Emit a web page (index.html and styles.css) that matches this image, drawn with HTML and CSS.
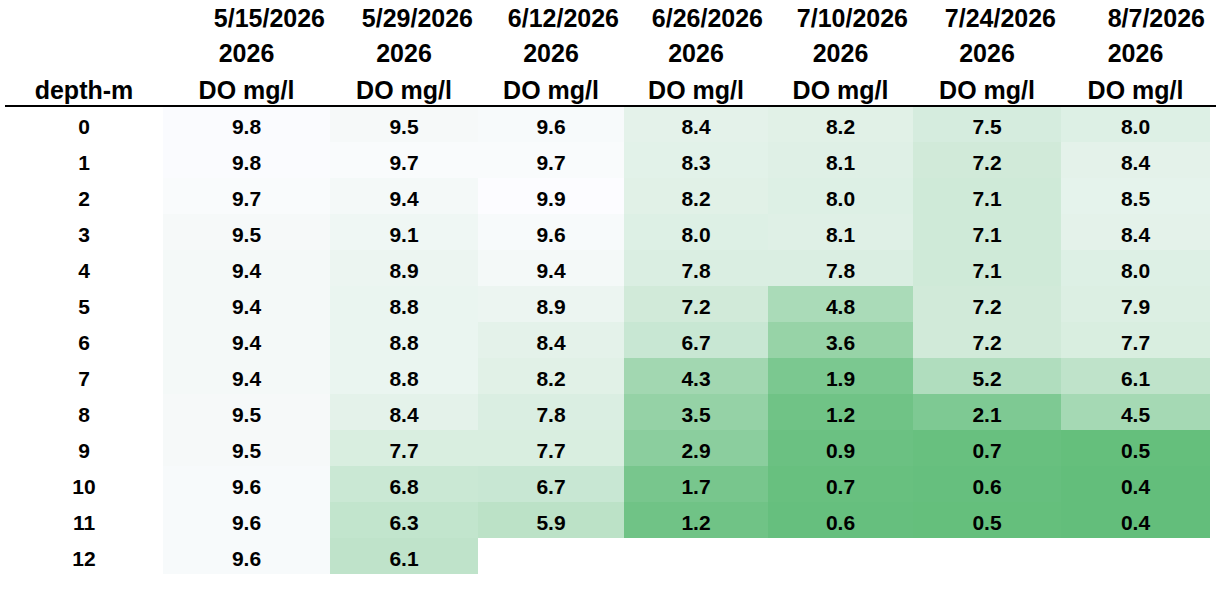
FILE: index.html
```html
<!DOCTYPE html>
<html>
<head>
<meta charset="utf-8">
<title>DO mg/l by depth</title>
<link rel="stylesheet" href="styles.css">
</head>
<body>
<table class="grid">
  <colgroup>
    <col class="c-depth">
    <col class="c-515">
    <col class="c-529">
    <col class="c-612">
    <col class="c-626">
    <col class="c-710">
    <col class="c-724">
    <col class="c-87">
    <col class="c-extra">
  </colgroup>
  <thead>
    <tr class="h-date">
      <th></th>
      <th class="date">5/15/2026</th>
      <th class="date">5/29/2026</th>
      <th class="date">6/12/2026</th>
      <th class="date">6/26/2026</th>
      <th class="date">7/10/2026</th>
      <th class="date">7/24/2026</th>
      <th class="date">8/7/2026</th>
      <th></th>
    </tr>
    <tr class="h-year">
      <th></th>
      <th>2026</th>
      <th>2026</th>
      <th>2026</th>
      <th>2026</th>
      <th>2026</th>
      <th>2026</th>
      <th>2026</th>
      <th></th>
    </tr>
    <tr class="h-unit">
      <th>depth-m</th>
      <th>DO mg/l</th>
      <th>DO mg/l</th>
      <th>DO mg/l</th>
      <th>DO mg/l</th>
      <th>DO mg/l</th>
      <th>DO mg/l</th>
      <th>DO mg/l</th>
      <th></th>
    </tr>
  </thead>
  <tbody id="rows"></tbody>
</table>
<script src="script.js"></script>
</body>
</html>
```
FILE: styles.css
```css
html, body {
  margin: 0;
  padding: 0;
  background: #ffffff;
}
body {
  font-family: "Liberation Sans", Arial, sans-serif;
  font-weight: bold;
  color: #000000;
  overflow: hidden;
}
.grid {
  margin-left: 5px;
  border-collapse: collapse;
  table-layout: fixed;
  width: 1211px;
}
.c-depth { width: 158px; }
.c-515 { width: 167px; }
.c-529 { width: 148px; }
.c-612 { width: 146px; }
.c-626 { width: 144px; }
.c-710 { width: 145px; }
.c-724 { width: 148px; }
.c-87 { width: 149px; }
.c-extra { width: 6px; }

.grid th {
  font-size: 25px;
  line-height: 28px;
  font-weight: bold;
  text-align: center;
  padding: 0;
  white-space: nowrap;
  overflow: visible;
}
.h-date { height: 35px; }
.h-date th { padding-top: 0; }
.h-year { height: 35px; }
.h-year th { padding-top: 1px; }
.h-unit { height: 36px; }
.h-date th.date {
  text-align: right;
  padding-right: 5px;
}
.h-unit th {
  vertical-align: bottom;
  padding-bottom: 1px;
  border-bottom: 2px solid #000000;
}
.grid td {
  height: 36px;
  box-sizing: border-box;
  padding: 5px 0 0 0;
  font-size: 21px;
  line-height: 24px;
  text-align: center;
  vertical-align: middle;
  white-space: nowrap;
}
.grid tbody tr { height: 36px; }
.grid td.empty { background: transparent; }
```
FILE: script.js
```js
var cols = [
  [9.8,9.8,9.7,9.5,9.4,9.4,9.4,9.4,9.5,9.5,9.6,9.6,9.6],
  [9.5,9.7,9.4,9.1,8.9,8.8,8.8,8.8,8.4,7.7,6.8,6.3,6.1],
  [9.6,9.7,9.9,9.6,9.4,8.9,8.4,8.2,7.8,7.7,6.7,5.9],
  [8.4,8.3,8.2,8.0,7.8,7.2,6.7,4.3,3.5,2.9,1.7,1.2],
  [8.2,8.1,8.0,8.1,7.8,4.8,3.6,1.9,1.2,0.9,0.7,0.6],
  [7.5,7.2,7.1,7.1,7.1,7.2,7.2,5.2,2.1,0.7,0.6,0.5],
  [8.0,8.4,8.5,8.4,8.0,7.9,7.7,6.1,4.5,0.5,0.4,0.4]
];
var MAX = 9.9, MIN = 0.4;
function shade(v) {
  var f = (MAX - v) / (MAX - MIN);
  var r = Math.round(252 - 153 * f);
  var g = Math.round(252 - 62 * f);
  var b = Math.round(255 - 132 * f);
  return "rgb(" + r + "," + g + "," + b + ")";
}
var body = document.getElementById("rows");
for (var d = 0; d <= 12; d++) {
  var tr = document.createElement("tr");
  var td0 = document.createElement("td");
  td0.textContent = String(d);
  tr.appendChild(td0);
  for (var c = 0; c < cols.length; c++) {
    var td = document.createElement("td");
    var v = cols[c][d];
    if (v !== undefined) {
      td.textContent = v.toFixed(1);
      td.style.backgroundColor = shade(v);
    } else {
      td.className = "empty";
    }
    tr.appendChild(td);
  }
  var tdx = document.createElement("td");
  tdx.className = "empty";
  tr.appendChild(tdx);
  body.appendChild(tr);
}
```
